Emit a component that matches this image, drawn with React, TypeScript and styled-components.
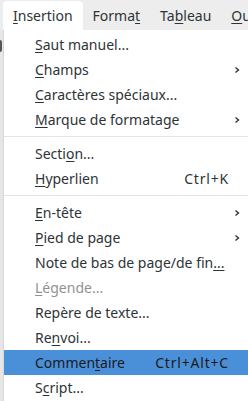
import React from "react";
import styled, { createGlobalStyle } from "styled-components";

const Global = createGlobalStyle`
  html, body { margin: 0; padding: 0; background: #ededed; }
  body { font-family: "Noto Sans", "DejaVu Sans", sans-serif; font-size: 14px; color: #2e3436; }
  * { box-sizing: border-box; }
`;

const Screen = styled.div`
  width: 248px;
  height: 401px;
  overflow: hidden;
  display: flex;
  flex-direction: column;
  background: #ededed;
`;

const MenuBar = styled.div`
  height: 30px;
  display: flex;
  align-items: flex-end;
  padding-left: 3px;
  white-space: nowrap;
`;

const BarItem = styled.div<{ $active?: boolean }>`
  height: 29px;
  display: flex;
  align-items: center;
  padding: 0 10px;
  border-radius: 4px 4px 0 0;
  background: ${(p) => (p.$active ? "#ffffff" : "transparent")};
  font-size: 14px;
  flex-shrink: 0;
`;

const Body = styled.div`
  flex: 1;
  display: flex;
  min-height: 0;
`;

const Gutter = styled.div`
  width: 3px;
  flex-shrink: 0;
  background: #e6e6e6;
  padding-top: 10px;
`;

const Smudge = styled.div`
  width: 2px;
  height: 12px;
  background: #555;
  border-radius: 0 2px 2px 0;
`;

const Popup = styled.div`
  flex: 1;
  background: #ffffff;
  border-left: 1px solid #d6d6d6;
  padding-top: 2px;
  display: flex;
  flex-direction: column;
`;

const Row = styled.div<{ $hover?: boolean; $disabled?: boolean }>`
  height: 25px;
  flex-shrink: 0;
  display: flex;
  align-items: center;
  padding-left: 31px;
  padding-right: 5px;
  font-size: 14px;
  background: ${(p) => (p.$hover ? "#4a90d9" : "transparent")};
  color: ${(p) => (p.$disabled ? "#8f9293" : p.$hover ? "#1a1a1a" : "#2e3436")};
  white-space: nowrap;
`;

const Label = styled.span`
  flex: 1;
`;

const Accel = styled.span`
  margin-right: 14px;
  letter-spacing: 0.8px;
`;

const Arrow = styled.svg`
  width: 8px;
  height: 8px;
  margin-right: 2px;
`;

const Sep = styled.div`
  height: 9px;
  flex-shrink: 0;
  display: flex;
  align-items: center;
  &::after {
    content: "";
    flex: 1;
    height: 1px;
    background: #e4e4e4;
  }
`;

const U = styled.span`
  text-decoration: underline;
  text-underline-offset: 2px;
  text-decoration-thickness: 1px;
`;

const Chevron = () => (
  <Arrow viewBox="0 0 8 8">
    <path d="M2.5 1.5 L5.5 4 L2.5 6.5" fill="none" stroke="#2e3436" strokeWidth="1.4" />
  </Arrow>
);

type Item = {
  pre: string;
  u: string;
  post: string;
  accel?: string;
  sub?: boolean;
  hover?: boolean;
  disabled?: boolean;
} | "sep";

const items: Item[] = [
  { pre: "", u: "S", post: "aut manuel..." },
  { pre: "", u: "C", post: "hamps", sub: true },
  { pre: "", u: "C", post: "aractères spéciaux..." },
  { pre: "", u: "M", post: "arque de formatage", sub: true },
  "sep",
  { pre: "Secti", u: "o", post: "n..." },
  { pre: "", u: "H", post: "yperlien", accel: "Ctrl+K" },
  "sep",
  { pre: "", u: "E", post: "n-tête", sub: true },
  { pre: "", u: "P", post: "ied de page", sub: true },
  { pre: "Note de bas de page/de fin", u: "...", post: "" },
  { pre: "", u: "L", post: "égende...", disabled: true },
  { pre: "Repère de texte...", u: "", post: "" },
  { pre: "Re", u: "n", post: "voi..." },
  { pre: "Commen", u: "t", post: "aire", accel: "Ctrl+Alt+C", hover: true },
  { pre: "S", u: "c", post: "ript..." },
];

export default function App() {
  return (
    <Screen>
      <Global />
      <MenuBar>
        <BarItem $active>
          <U>I</U>nsertion
        </BarItem>
        <BarItem>
          Forma<U>t</U>
        </BarItem>
        <BarItem>
          Ta<U>b</U>leau
        </BarItem>
        <BarItem>
          <U>O</U>util
        </BarItem>
      </MenuBar>
      <Body>
        <Gutter>
          <Smudge />
        </Gutter>
        <Popup>
          {items.map((it, i) =>
            it === "sep" ? (
              <Sep key={i} />
            ) : (
              <Row key={i} $hover={it.hover} $disabled={it.disabled}>
                <Label>
                  {it.pre}
                  {it.u && <U>{it.u}</U>}
                  {it.post}
                </Label>
                {it.accel && <Accel>{it.accel}</Accel>}
                {it.sub && <Chevron />}
              </Row>
            )
          )}
        </Popup>
      </Body>
    </Screen>
  );
}
